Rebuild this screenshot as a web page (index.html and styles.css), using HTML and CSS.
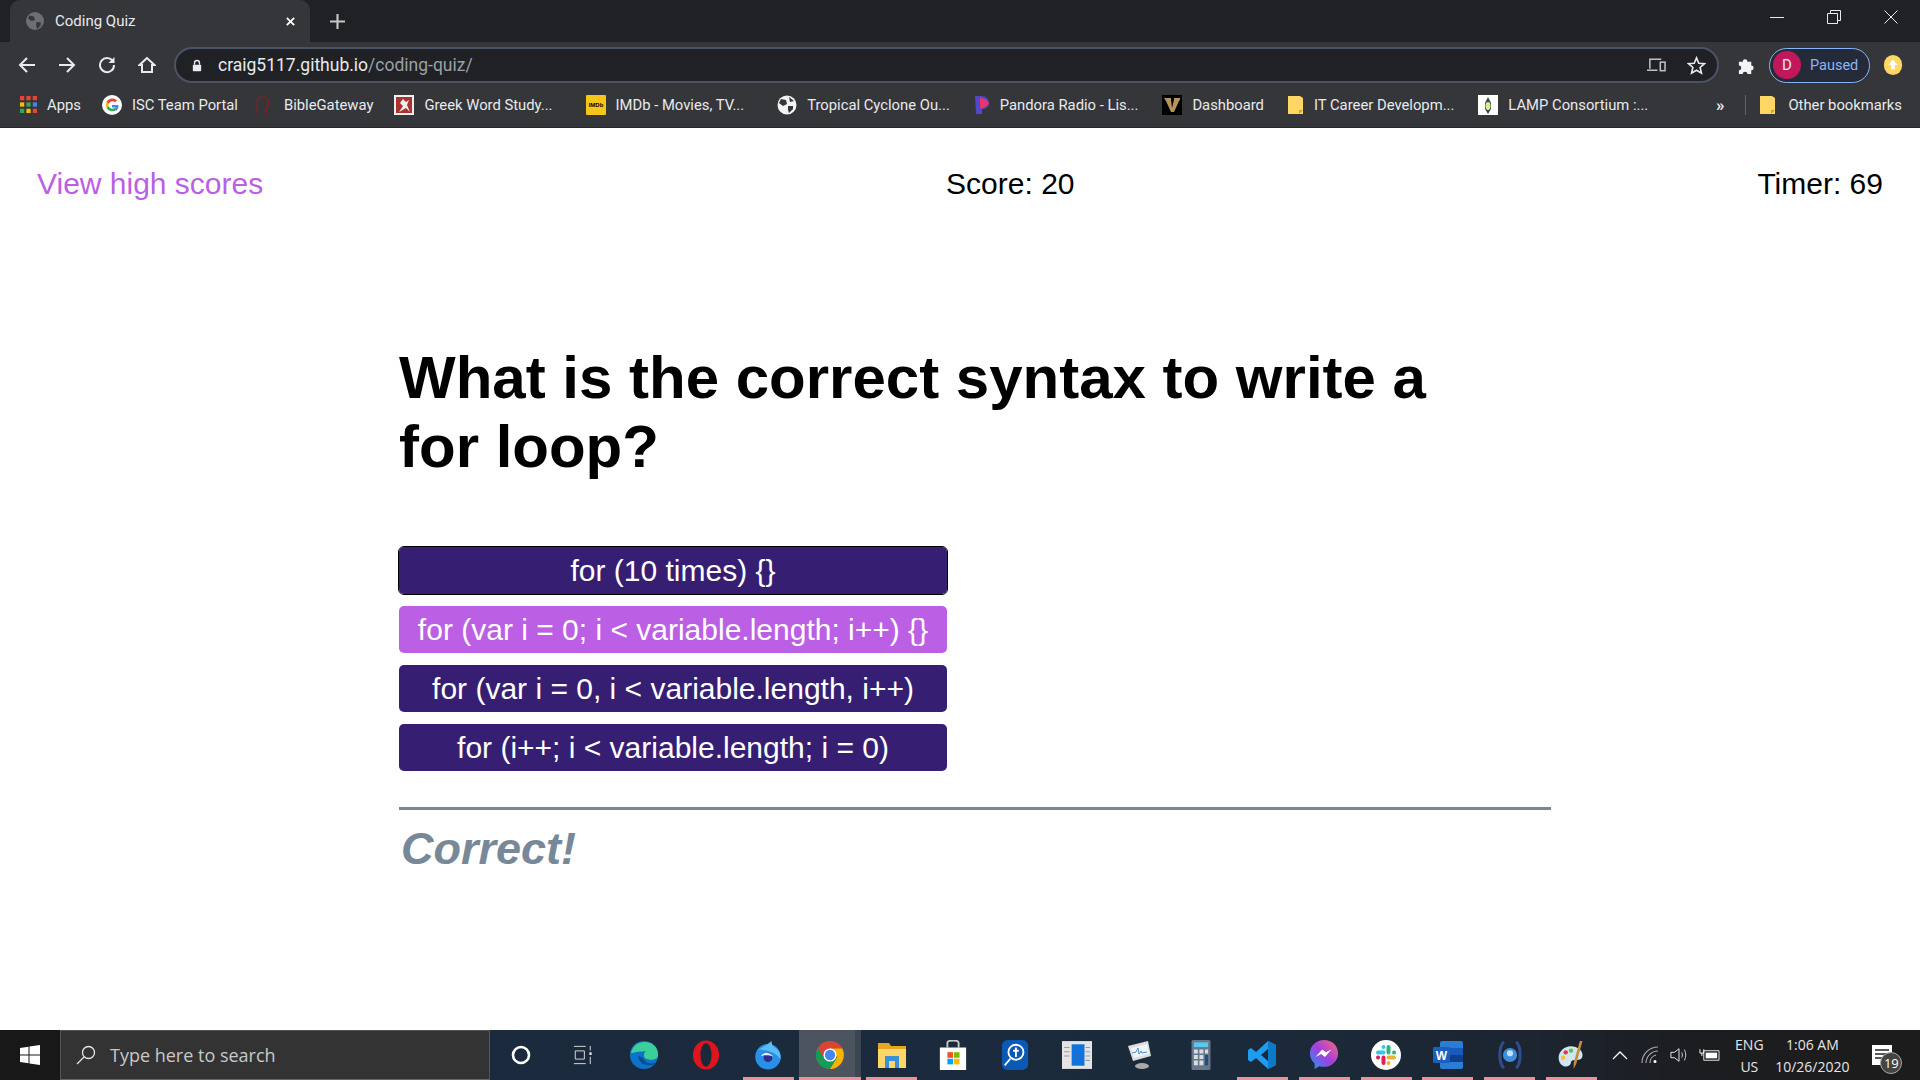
FILE: index.html
```html
<!DOCTYPE html>
<html lang="en">
<head>
    <meta charset="UTF-8">
    <title>Coding Quiz</title>
    <link rel="stylesheet" href="styles.css">
</head>
<body>
    <!-- Browser frame -->
    <header class="browser">
        <div class="tab-strip">
            <div class="tab">
                <svg class="tab-favicon" viewBox="0 0 16 16"><circle cx="8" cy="8" r="8" fill="#6b6e73"/><path d="M3 3l4 1 1 3-3 1-3-2zM9 9l4 0 0 3-3 3-1-3z" fill="#35363a"/></svg>
                <span class="tab-title">Coding Quiz</span>
                <svg class="tab-close" viewBox="0 0 12 12"><path d="M2 2l8 8M10 2l-8 8" stroke="#fff" stroke-width="2"/></svg>
            </div>
            <svg class="tab-new" viewBox="0 0 14 14"><path d="M7 0v14M0 7h14" stroke="#c4c7c5" stroke-width="2"/></svg>
            <div class="window-controls">
                <svg viewBox="0 0 14 14"><path d="M0 7.5h14" stroke="#e8eaed" stroke-width="1"/></svg>
                <svg viewBox="0 0 14 14"><path d="M.5 3.5h10v10H.5zM3.5 3V.5h10v10H11" fill="none" stroke="#e8eaed"/></svg>
                <svg viewBox="0 0 14 14"><path d="M.5.5l13 13M13.5.5l-13 13" stroke="#e8eaed"/></svg>
            </div>
        </div>

        <div class="toolbar">
            <svg class="nav-icon" viewBox="0 0 18 18"><path d="M17 9H2M9 2L2 9l7 7" fill="none" stroke="#e8eaed" stroke-width="2"/></svg>
            <svg class="nav-icon" viewBox="0 0 18 18"><path d="M1 9h15M9 2l7 7-7 7" fill="none" stroke="#e8eaed" stroke-width="2"/></svg>
            <svg class="nav-icon" viewBox="0 0 18 18"><path d="M15 5.5A7 7 0 1 0 16 9" fill="none" stroke="#e8eaed" stroke-width="2"/><path d="M16.5 1v6h-6z" fill="#e8eaed"/></svg>
            <svg class="nav-icon" viewBox="0 0 18 18"><path d="M9 2L1.5 9H4v7h10V9h2.5z" fill="none" stroke="#e8eaed" stroke-width="2"/></svg>
            <div class="omnibox">
                <svg class="lock" viewBox="0 0 12 14"><path d="M3 6V4a3 3 0 0 1 6 0v2" fill="none" stroke="#e8eaed" stroke-width="1.6"/><rect x="1" y="6" width="10" height="8" rx="1" fill="#e8eaed"/></svg>
                <span class="url"><span class="url-host">craig5117.github.io</span>/coding-quiz/</span>
                <svg class="omni-icon" viewBox="0 0 20 16"><path d="M3 12V2h12M0 13.5h11" fill="none" stroke="#bdc1c6" stroke-width="1.6"/><rect x="14" y="5" width="5" height="9" fill="none" stroke="#bdc1c6" stroke-width="1.6"/></svg>
                <svg class="omni-icon star" viewBox="0 0 20 20"><path d="M10 2l2.4 5.6 6 .5-4.6 4 1.400 6L10 15l-5.200 3.100 1.400-6-4.600-4 6-.5z" fill="none" stroke="#e8eaed" stroke-width="1.7"/></svg>
            </div>
            <svg class="puzzle" viewBox="0 0 20 20"><path d="M2 6h4a2.5 2.5 0 1 1 5 0h4v4a2.5 2.5 0 1 1 0 5v4h-4a2.5 2.5 0 1 0-5 0H2v-4a2.5 2.5 0 1 0 0-5z" fill="#f1f3f4"/></svg>
            <div class="profile">
                <span class="avatar">D</span>
                <span class="paused">Paused</span>
            </div>
            <svg class="update" viewBox="0 0 20 24"><ellipse cx="10" cy="12" rx="10" ry="11" fill="#fdd663"/><path d="M10 6l5 6h-3v5H8v-5H5z" fill="#fff"/></svg>
        </div>

        <nav class="bookmarks">
            <a class="bm">
                <svg class="bm-icon bm-apps" viewBox="0 0 16 16">
                    <path d="M0 0h4v4H0z" fill="#ea4335"/><path d="M6 0h4v4H6z" fill="#ea4335"/><path d="M12 0h4v4h-4z" fill="#ea4335"/>
                    <path d="M0 6h4v4H0z" fill="#fbbc04"/><path d="M6 6h4v4H6z" fill="#34a853"/><path d="M12 6h4v4h-4z" fill="#4285f4"/>
                    <path d="M0 12h4v4H0z" fill="#34a853"/><path d="M6 12h4v4H6z" fill="#fbbc04"/><path d="M12 12h4v4h-4z" fill="#ea4335"/>
                </svg>
                <span>Apps</span>
            </a>
            <a class="bm bm-tight">
                <svg class="bm-icon" viewBox="0 0 20 20">
                    <circle cx="10" cy="10" r="10" fill="#fff"/>
                    <path d="M15 5.5A6.5 6.5 0 0 0 4.5 7l2 2A4 4 0 0 1 13 7.300z" fill="#ea4335"/>
                    <path d="M4.500 7a6.5 6.5 0 0 0 0 6l2.200-1.700a4 4 0 0 1 0-2.600z" fill="#fbbc04"/>
                    <path d="M4.500 13a6.5 6.5 0 0 0 10 1.700l-2.200-1.600a4 4 0 0 1-5.600-1.800z" fill="#34a853"/>
                    <path d="M16.500 10H10v2.500h3.600a3 3 0 0 1-1.300 1.600l2.200 1.600A6.5 6.5 0 0 0 16.500 10z" fill="#4285f4"/>
                </svg>
                <span>ISC Team Portal</span>
            </a>
            <a class="bm">
                <svg class="bm-icon" viewBox="0 0 20 20"><path d="M3 18V8a6 6 0 0 1 12 0c0 3-2 3-3 5 0 2 0 4 1 6" fill="none" stroke="#7a2326" stroke-width="1.5"/></svg>
                <span>BibleGateway</span>
            </a>
            <a class="bm bm-wide">
                <svg class="bm-icon" viewBox="0 0 20 20"><rect width="20" height="20" fill="#f3eeee"/><rect x="2" y="2" width="16" height="16" fill="#a8322f"/><path d="M5 17l4-6-3-3 3-4 3 3 3-2-2 5 3 7-4-4z" fill="#f3eeee"/></svg>
                <span>Greek Word Study...</span>
            </a>
            <a class="bm bm-wide">
                <svg class="bm-icon" viewBox="0 0 20 20"><rect width="20" height="20" rx="1" fill="#f5c518"/><text x="10" y="12" text-anchor="middle" class="imdb">IMDb</text></svg>
                <span>IMDb - Movies, TV...</span>
            </a>
            <a class="bm bm-mid">
                <svg class="bm-icon" viewBox="0 0 20 20"><circle cx="10" cy="10" r="9.5" fill="#f1f3f4"/><path d="M4 4l5 1 1 4-4 2-4-3zM11 11l5 0 0 3-4 4-1-3zM12 2l5 4-4 1z" fill="#35363a"/></svg>
                <span>Tropical Cyclone Ou...</span>
            </a>
            <a class="bm bm-mid">
                <svg class="bm-icon bm-narrow" viewBox="0 0 16 20"><path d="M1 1h7a7 7 0 0 1 7 7c0 4-3 6-7 6v5H2z" fill="#5147c9"/><path d="M6 2l8 4 1 3-7 5-2-2z" fill="#e8346f"/></svg>
                <span>Pandora Radio - Lis...</span>
            </a>
            <a class="bm bm-mid">
                <svg class="bm-icon" viewBox="0 0 20 20"><rect width="20" height="20" fill="#000"/><path d="M2 3h7v2L10 13l2-8V3h6v2l-1 1-5 11H9L4 6z" fill="#b4975a"/></svg>
                <span>Dashboard</span>
            </a>
            <a class="bm bm-mid">
                <svg class="bm-icon bm-narrow" viewBox="0 0 16 20"><path d="M0 1h12l3 2v16H0z" fill="#fdd663"/><path d="M11 19v-4h4z" fill="#c9a53c"/></svg>
                <span>IT Career Developm...</span>
            </a>
            <a class="bm">
                <svg class="bm-icon" viewBox="0 0 20 20"><rect width="20" height="20" fill="#fff"/><path d="M10 2l3 6v6l-3 5-3-5V8z" fill="#2d4f4c"/><ellipse cx="10" cy="11" rx="2.5" ry="4" fill="#e4e48a"/></svg>
                <span>LAMP Consortium :...</span>
            </a>
            <span class="bm-more">»</span>
            <a class="bm bm-other">
                <svg class="bm-icon bm-narrow" viewBox="0 0 16 20"><path d="M0 1h12l3 2v16H0z" fill="#fdd663"/><path d="M11 19v-4h4z" fill="#c9a53c"/></svg>
                <span>Other bookmarks</span>
            </a>
        </nav>
    </header>

    <!-- Quiz page -->
    <main class="page">
        <div class="score-bar">
            <a class="high-scores">View high scores</a>
            <span>Score: 20</span>
            <span>Timer: 69</span>
        </div>
        <section class="quiz">
            <h1 class="question">What is the correct syntax to write a for loop?</h1>
            <div class="answers">
                <button class="answer answer-focus">for (10 times) {}</button>
                <button class="answer answer-hover">for (var i = 0; i &lt; variable.length; i++) {}</button>
                <button class="answer">for (var i = 0, i &lt; variable.length, i++)</button>
                <button class="answer">for (i++; i &lt; variable.length; i = 0)</button>
            </div>
            <p class="result">Correct!</p>
        </section>
    </main>

    <!-- Windows taskbar -->
    <footer class="taskbar">
        <div class="start">
            <svg viewBox="0 0 20 20"><path d="M0 3l8.5-1.200v7.700H0zM9.500 1.600L20 0v9.500H9.500zM0 10.500h8.500v7.700L0 17zM9.500 10.500H20V20L9.500 18.400z" fill="#fff"/></svg>
        </div>
        <div class="search">
            <svg viewBox="0 0 20 20"><circle cx="12.5" cy="7.5" r="6" fill="none" stroke="#e6e6e6" stroke-width="1.3"/><path d="M8 12l-7 7" stroke="#e6e6e6" stroke-width="1.3"/></svg>
            <span>Type here to search</span>
        </div>
        <div class="apps">
            <div class="app"><svg viewBox="0 0 20 20"><circle cx="10" cy="10" r="8" fill="none" stroke="#fff" stroke-width="2.6"/></svg></div>
            <div class="app"><svg viewBox="0 0 22 22"><path d="M1 1.500h13M1 20.500h13M2.500 6.500h10v9h-10z" fill="none" stroke="#e6e6e6"/><path d="M19 1v5" stroke="#e6e6e6"/><rect x="18" y="8" width="2.5" height="3" fill="#e6e6e6"/><path d="M19 13v8" stroke="#e6e6e6"/></svg></div>
            <div class="app"><svg viewBox="0 0 32 32"><circle cx="16" cy="16" r="15" fill="#0c73c9"/><path d="M2 14C4 4 14 0 22 3c6 2 9 7 9 13 0 4-4 5-8 5-5 0-7-2-7-5 0-2 1-3 2-4-6 0-11 1-16 2z" fill="#3ccf9c"/><path d="M10 17c0 7 6 10 12 10 3 0 5-1 7-3-5 2-10 1-13-3-1-2-2-3-6-4z" fill="#0a4f94"/></svg></div>
            <div class="app"><svg viewBox="0 0 30 32"><ellipse cx="15" cy="16" rx="14" ry="15.5" fill="#e0141f"/><ellipse cx="15" cy="16" rx="6" ry="12.5" fill="#1b2a3b"/></svg></div>
            <div class="app"><svg viewBox="0 0 32 34"><circle cx="16" cy="19" r="14.500" fill="#2a8fe6"/><path d="M3 11c5-1 11-5 17-10 0 3 1 5 3 7 5 3 8 8 7 14C26 14 13 10 3 11z" fill="#5cbcf5"/><circle cx="16" cy="20" r="5" fill="#2f2c8f"/><path d="M8 18c3-5 11-4 14 1-4-2-9-2-14-1z" fill="#eaf5ff"/></svg></div>
            <div class="app app-active">
                <svg viewBox="0 0 32 32">
                    <circle cx="16" cy="16" r="15" fill="#db4437"/>
                    <path d="M16 16L3 23.500A15 15 0 0 0 16 31l8-13z" fill="#0f9d58"/>
                    <path d="M3 23.500A15 15 0 0 1 3 8.500L10 20z" fill="#0f9d58"/>
                    <path d="M16 9h13a15 15 0 0 1-13 22l8-13z" fill="#f4b400"/>
                    <circle cx="16" cy="16" r="7" fill="#fff"/><circle cx="16" cy="16" r="5.5" fill="#4285f4"/>
                </svg>
            </div>
            <div class="app"><svg viewBox="0 0 30 30"><path d="M1 3h11l2 3h15v3H1z" fill="#e2a820"/><path d="M1 9h28v19H1z" fill="#fcd768"/><path d="M8 28V16h14v12h-4v-7h-6v7z" fill="#3c8fd6"/></svg></div>
            <div class="app"><svg viewBox="0 0 30 32"><path d="M9 8V3a6 2.5 0 0 1 12 0v5" fill="none" stroke="#c7c7c7" stroke-width="2"/><path d="M1 8h28v24H1z" fill="#fff"/><path d="M9 13h6v6H9z" fill="#f25022"/><path d="M16 13h6v6h-6z" fill="#7fba00"/><path d="M9 20h6v6H9z" fill="#00a4ef"/><path d="M16 20h6v6h-6z" fill="#ffb900"/></svg></div>
            <div class="app"><svg viewBox="0 0 28 32"><rect width="28" height="32" rx="6" fill="#0a59b5"/><circle cx="15" cy="13" r="8" fill="none" stroke="#fff" stroke-width="2"/><path d="M15 8v10M12 11.500h6M9 20l-6 7" stroke="#fff" stroke-width="2"/></svg></div>
            <div class="app"><svg viewBox="0 0 28 26"><rect width="28" height="26" fill="#e4e4e4"/><path d="M9 3h12v20H9z" fill="#1372d9"/><path d="M2 6h5M2 10h5M2 14h5M22 6h4M22 10h4M22 14h4M22 18h4" stroke="#999"/></svg></div>
            <div class="app"><svg viewBox="0 0 28 30"><path d="M3 6l20-5 3 15-18 5z" fill="#ddd"/><path d="M6 8l16-4 2 10-15 4z" fill="#eef3f8"/><path d="M7 13l4-1 2-4 1 6 2-3 1 2 5-1" fill="none" stroke="#4a8fd0"/><ellipse cx="17" cy="26" rx="7" ry="3" fill="#aaa"/></svg></div>
            <div class="app"><svg viewBox="0 0 24 38"><rect width="24" height="38" rx="2" fill="#66788a"/><rect x="3" y="3" width="18" height="6" fill="#5ac9f0"/><path d="M3 12h5v5H3zM10 12h5v5h-5zM17 12h4v5h-4zM3 19h5v5H3zM10 19h5v5h-5zM3 26h5v6H3zM10 26h5v6h-5z" fill="#d9dde1"/><path d="M17 19h4v13h-4z" fill="#1d4f85"/></svg></div>
            <div class="app"><svg viewBox="0 0 30 30"><path d="M21 1l8 4v20l-8 4L9 18l-5 4-3-2V10l3-2 5 4z" fill="#1f9cf0"/><path d="M21 1l8 4v20l-8 4z" fill="#0a7cc7"/><path d="M21 9l-7 6 7 6z" fill="#1b2a3b"/></svg></div>
            <div class="app"><svg viewBox="0 0 30 32"><defs><linearGradient id="msgr" x1="0" y1="1" x2="1" y2="0"><stop offset="0" stop-color="#1c9bf0"/><stop offset=".5" stop-color="#a33de0"/><stop offset="1" stop-color="#fb6a75"/></linearGradient></defs><path d="M15 0C7 0 0 6 0 14c0 5 2 8 5 11v6l5-3c2 .4 3 .6 5 .6 8 0 15-6 15-14.600S23 0 15 0z" fill="url(#msgr)"/><path d="M6 18l7-8 4 3 6-3-7 8-4-3z" fill="#fff"/></svg></div>
            <div class="app"><svg viewBox="0 0 30 30"><circle cx="15" cy="15" r="15" fill="#fff"/><g fill="none" stroke-width="4" stroke-linecap="round"><path d="M7 12.5h5.500M12.500 7v.1" stroke="#36c5f0"/><path d="M17.500 7v5.500M23 12.500h.1" stroke="#2eb67d"/><path d="M17.500 17.500H23M17.500 23v.1" stroke="#ecb22e"/><path d="M12.500 17.500V23M7 17.500h.1" stroke="#e01e5a"/></g></svg></div>
            <div class="app"><svg viewBox="0 0 30 28"><rect x="7" width="23" height="28" rx="2" fill="#2b7cd3"/><path d="M7 7h23v7H7z" fill="#185abd"/><path d="M7 14h23v7H7z" fill="#103f91"/><rect y="6" width="17" height="16" rx="1" fill="#1a5fbd"/><text x="8.5" y="19" text-anchor="middle" class="word">W</text></svg></div>
            <div class="app"><svg viewBox="0 0 30 34"><path d="M8 2C2 8 2 26 8 32M22 2c6 6 6 24 0 30" fill="none" stroke="#2d4d8f" stroke-width="3.5"/><circle cx="15" cy="17" r="8" fill="#3e8edb"/><circle cx="15" cy="15" r="3.5" fill="#bfe2ff"/></svg></div>
            <div class="app"><svg viewBox="0 0 30 34"><path d="M15 7C7 7 1 13 1 20c0 8 7 12 12 9 3-2 1-5 4-6 4-1 10 1 11-5 1-6-6-11-13-11z" fill="#cfe6f2"/><circle cx="9" cy="14" r="2.5" fill="#e03a3a"/><circle cx="15" cy="12" r="2.5" fill="#5fc04a"/><circle cx="6" cy="20" r="2.5" fill="#f2c230"/><path d="M28 1l-7 26-3 6 0-7 7-25z" fill="#c98b3c"/></svg></div>
        </div>
        <div class="tray">
            <svg class="tray-chevron" viewBox="0 0 16 10"><path d="M1 9l7-7 7 7" fill="none" stroke="#fff" stroke-width="1.3"/></svg>
            <svg class="tray-icon" viewBox="0 0 18 18"><path d="M1 17A16 16 0 0 1 17 1M5 17A12 12 0 0 1 17 5M9 17a8 8 0 0 1 6-8" fill="none" stroke="#aaa" stroke-width="1.1"/><circle cx="14" cy="15.5" r="1.5" fill="#fff"/></svg>
            <svg class="tray-icon" viewBox="0 0 20 18"><path d="M1 6h4l5-4v14l-5-4H1z" fill="none" stroke="#e6e6e6" stroke-width="1.1"/><path d="M13 6c1 2 1 4 0 6M16 3c2 4 2 8 0 12" fill="none" stroke="#ccc" stroke-width="1.1"/></svg>
            <svg class="tray-icon tray-battery" viewBox="0 0 22 14"><path d="M5 2.500h16v10H5z" fill="#222" stroke="#e6e6e6"/><path d="M7 4.500h12v6H7z" fill="#fff"/><path d="M1 1v4h4V1M3 5v3" fill="none" stroke="#fff"/></svg>
            <div class="lang"><span>ENG</span><span>US</span></div>
            <div class="clock"><span>1:06 AM</span><span>10/26/2020</span></div>
            <div class="notify">
                <svg viewBox="0 0 20 20"><path d="M0 0h20v20H0z" fill="#fff"/><path d="M3 5h14M3 9h14M3 13h9" stroke="#222" stroke-width="1.3"/></svg>
                <span class="notify-badge">19</span>
            </div>
        </div>
    </footer>
</body>
</html>
```

FILE: styles.css
```css
* {
    box-sizing: border-box;
}

html, body {
    height: 100%;
}

body {
    margin: 0;
    display: flex;
    flex-direction: column;
    overflow: hidden;
    background-color: white;
    font-family: "Liberation Sans", Arial, sans-serif;
}

svg {
    display: block;
    flex: none;
}

/* Browser frame */
.browser {
    flex: none;
    font-family: Roboto, "Open Sans", sans-serif;
    color: #e8eaed;
}

.tab-strip {
    display: flex;
    align-items: center;
    height: 42px;
    padding-left: 10px;
    background-color: #202124;
}

.tab {
    display: flex;
    align-items: center;
    width: 300px;
    height: 42px;
    padding: 0 14px 0 16px;
    background-color: #35363a;
    border-radius: 10px 10px 0 0;
    font-size: 15px;
}

.tab-favicon {
    width: 18px;
    height: 18px;
    margin-right: 11px;
}

.tab-title {
    flex: 1;
}

.tab-close {
    width: 11px;
    height: 11px;
}

.tab-new {
    width: 15px;
    height: 15px;
    margin-left: 20px;
}

.window-controls {
    display: flex;
    gap: 43px;
    margin-left: auto;
    padding-right: 22px;
    margin-top: -8px;
}

.window-controls svg {
    width: 14px;
    height: 14px;
}

.toolbar {
    display: flex;
    align-items: center;
    height: 46px;
    padding-left: 18px;
    background-color: #35363a;
}

.nav-icon {
    width: 18px;
    height: 18px;
    margin-right: 22px;
}

.omnibox {
    display: flex;
    align-items: center;
    width: 1545px;
    height: 36px;
    margin-left: -4px;
    padding: 0 11px 0 16px;
    background-color: #202124;
    border: 2px solid #4a5366;
    border-radius: 18px;
}

.lock {
    width: 10px;
    height: 13px;
    margin-right: 16px;
}

.url {
    flex: 1;
    font-size: 17.5px;
    color: #9aa0a6;
}

.url-host {
    color: #e8eaed;
}

.omni-icon {
    width: 19px;
    height: 16px;
}

.star {
    width: 19px;
    height: 19px;
    margin-left: 21px;
}

.puzzle {
    width: 19px;
    height: 19px;
    margin-left: 18px;
}

.profile {
    display: flex;
    align-items: center;
    width: 101px;
    height: 35px;
    margin-left: 13px;
    padding-left: 3px;
    background-color: #252a38;
    border: 1px solid #8ab4f8;
    border-radius: 18px;
}

.avatar {
    display: flex;
    align-items: center;
    justify-content: center;
    width: 28px;
    height: 28px;
    background-color: #c2185b;
    border-radius: 50%;
    font-size: 15px;
}

.paused {
    margin-left: 9px;
    font-size: 14.5px;
    color: #8ab4f8;
}

.update {
    width: 20px;
    height: 22px;
    margin-left: 13px;
}

.bookmarks {
    display: flex;
    align-items: center;
    gap: 21px;
    height: 40px;
    padding: 0 18px 6px 20px;
    background-color: #35363a;
    border-bottom: 1px solid #26272a;
    font-size: 14.8px;
    white-space: nowrap;
}

.bm {
    display: flex;
    align-items: center;
    gap: 10px;
}

.bm-tight {
    margin-right: -5px;
}

.bm-mid {
    margin-right: 3px;
}

.bm-wide {
    margin-right: 12px;
}

.bm-icon {
    width: 20px;
    height: 20px;
}

.bm-apps {
    width: 17px;
    height: 17px;
}

.bm-narrow {
    width: 16px;
}

.imdb {
    font: bold 6px "Liberation Sans", sans-serif;
}

.word {
    font: bold 12px "Liberation Sans", sans-serif;
    fill: white;
}

.bm-more {
    margin-left: auto;
    font-size: 17px;
    font-weight: bold;
}

.bm-other {
    gap: 12px;
    padding-left: 14px;
    border-left: 1px solid #5f6368;
}

/* Quiz page */
.page {
    flex: 1;
    min-height: 0;
}

.score-bar {
    display: flex;
    justify-content: space-between;
    padding: 37px 37px 0;
    font-size: 30px;
    line-height: 37px;
    color: black;
}

.high-scores {
    color: #bb5fe4;
}

.quiz {
    padding: 0 369px 0 399px;
}

.question {
    max-width: 1100px;
    margin: 141px 0 66px;
    font-size: 60px;
    line-height: 69px;
    font-weight: bold;
    color: black;
}

.answers {
    width: 548px;
    padding-bottom: 24px;
}

.answer {
    display: block;
    width: 100%;
    height: 47px;
    margin-bottom: 12px;
    padding: 0;
    background-color: #361f73;
    color: white;
    border: none;
    border-radius: 5px;
    font-family: "Liberation Sans", Arial, sans-serif;
    font-size: 30px;
}

.answer-focus {
    outline: 1px solid #000;
    outline-offset: 0;
}

.answer-hover {
    background-color: #bb5fe4;
}

.result {
    margin: 0;
    padding-top: 11px;
    border-top: 3px solid #778899;
    font-size: 45px;
    line-height: 56px;
    font-weight: bold;
    font-style: italic;
    color: #778899;
    text-indent: 2px;
}

/* Windows taskbar */
.taskbar {
    flex: none;
    display: flex;
    height: 50px;
    background: linear-gradient(90deg, #1a2b3e 0%, #1b2a3b 65%, #1c2530 80%, #1c1d20 88%, #1c1c1c 100%);
    color: #e6e6e6;
    font-family: "Open Sans", sans-serif;
}

.start {
    display: flex;
    align-items: center;
    justify-content: center;
    width: 60px;
    background-color: #181818;
}

.start svg {
    width: 20px;
    height: 20px;
}

.search {
    display: flex;
    align-items: center;
    gap: 14px;
    width: 430px;
    padding-left: 15px;
    background-color: #333;
    border: 1px solid #555;
    border-bottom-color: #666;
    font-size: 18px;
    color: #c8c8c8;
}

.search svg {
    width: 20px;
    height: 20px;
}

.apps {
    display: flex;
}

.app {
    display: flex;
    align-items: center;
    justify-content: center;
    width: 61.8px;
    height: 50px;
}

.app svg {
    max-width: 30px;
    height: 30px;
}

.app:nth-child(-n+2) svg {
    width: 20px;
    height: 20px;
}

.app:nth-child(3) svg,
.app:nth-child(n+5) svg {
    width: 30px;
}

.app:nth-child(4) svg {
    width: 28px;
}

/* pink bar under running apps */
.app:nth-child(5),
.app:nth-child(7),
.app:nth-child(n+13) {
    background: linear-gradient(#e8939c, #e8939c) center bottom / 51px 3px no-repeat;
}

.app-active {
    background:
        linear-gradient(#e8939c, #e8939c) center bottom / 100% 3px no-repeat,
        linear-gradient(90deg, #4c5460 90%, #3d4550 90%);
}

.tray {
    flex: 1;
    display: flex;
    align-items: center;
    padding-left: 10px;
}

.tray-chevron {
    width: 16px;
    height: 10px;
    margin-right: 13px;
}

.tray-icon {
    width: 18px;
    height: 18px;
    margin-right: 11px;
}

.tray-battery {
    width: 21px;
    height: 14px;
    margin-right: 12px;
}

.lang,
.clock {
    display: flex;
    flex-direction: column;
    align-items: center;
    gap: 5px;
    font-size: 14px;
    line-height: 17px;
}

.lang {
    width: 34px;
}

.clock {
    width: 80px;
    margin-left: 6px;
}

.notify {
    position: relative;
    width: 20px;
    height: 20px;
    margin-left: 20px;
}

.notify svg {
    width: 20px;
    height: 20px;
}

.notify-badge {
    position: absolute;
    right: -10px;
    bottom: -9px;
    display: flex;
    align-items: center;
    justify-content: center;
    width: 22px;
    height: 22px;
    background-color: #444;
    border: 1px solid #aaa;
    border-radius: 50%;
    font-size: 13px;
    color: white;
}
```
